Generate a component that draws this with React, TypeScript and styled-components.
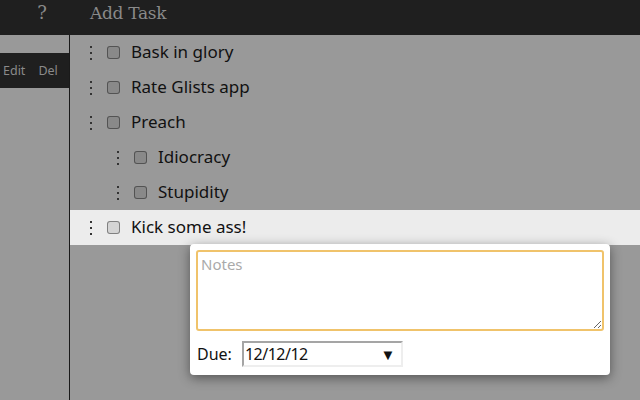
import React from 'react';
import styled, { createGlobalStyle } from 'styled-components';

const GlobalStyle = createGlobalStyle`
  html, body {
    margin: 0;
    padding: 0;
    width: 640px;
    height: 400px;
    overflow: hidden;
    background: #999999;
  }
`;

interface Task {
  title: string;
  depth: number;
  selected?: boolean;
}

const tasks: Task[] = [
  { title: 'Bask in glory', depth: 0 },
  { title: 'Rate Glists app', depth: 0 },
  { title: 'Preach', depth: 0 },
  { title: 'Idiocracy', depth: 1 },
  { title: 'Stupidity', depth: 1 },
  { title: 'Kick some ass!', depth: 0, selected: true },
];

const Shell = styled.div`
  width: 640px;
  height: 400px;
  display: grid;
  grid-template-columns: 70px 1fr;
  grid-template-rows: 35px 1fr;
  background: #999999;
  font-family: 'Noto Sans', 'Open Sans', sans-serif;
`;

const TopBar = styled.header`
  grid-column: 1 / 3;
  display: grid;
  grid-template-columns: 70px 1fr;
  align-items: center;
  background: #1f1f1f;
  color: #8a8a8a;
  font-family: 'DejaVu Serif', 'Liberation Serif', serif;
  font-size: 17px;
`;

const HelpMark = styled.span`
  justify-self: end;
  padding-right: 23px;
  font-size: 18px;
  margin-top: -10px;
`;

const AddTask = styled.span`
  padding-left: 20px;
  margin-top: -10px;
  letter-spacing: -0.3px;
`;

const Sidebar = styled.aside`
  background: #999999;
  border-right: 1px solid #1a1a1a;
  padding-top: 18px;
`;

const ActionStrip = styled.div`
  height: 35px;
  background: #1f1f1f;
  display: flex;
  align-items: center;
  gap: 13px;
  padding-left: 3px;
  color: #8a8a8a;
  font-size: 12.5px;
`;

const Main = styled.main`
  position: relative;
  background: #999999;
`;

const Row = styled.div<{ $depth: number; $selected?: boolean }>`
  height: 35px;
  display: flex;
  align-items: center;
  padding-left: ${({ $depth }) => 20 + $depth * 27}px;
  background: ${({ $selected }) => ($selected ? '#ececec' : 'transparent')};
  color: #111;
  font-size: 17px;
`;

const Handle = styled.span`
  width: 3px;
  display: flex;
  flex-direction: column;
  gap: 4px;
  margin-right: 14px;

  i {
    display: block;
    width: 2px;
    height: 2px;
    background: #333;
  }
`;

const Check = styled.span`
  width: 13px;
  height: 13px;
  box-sizing: border-box;
  border: 1px solid rgba(0, 0, 0, 0.4);
  border-radius: 3px;
  background: rgba(0, 0, 0, 0.1);
  margin-right: 11px;
  margin-top: -1px;
`;

const Title = styled.span`
  margin-top: -3px;
`;

const Popover = styled.div`
  position: absolute;
  left: 120px;
  top: 209px;
  width: 420px;
  height: 131px;
  background: #fff;
  border-radius: 4px;
  box-shadow: 0 3px 12px rgba(0, 0, 0, 0.45);
  padding: 6px;
  box-sizing: border-box;
  display: flex;
  flex-direction: column;
  gap: 10px;
`;

const Notes = styled.textarea`
  width: 408px;
  height: 81px;
  box-sizing: border-box;
  border: 2px solid #f0c36b;
  border-radius: 3px;
  outline: none;
  resize: both;
  font-family: 'Noto Sans', 'Open Sans', sans-serif;
  font-size: 15px;
  padding: 2px 3px;
  margin: 0;

  &::placeholder {
    color: #aaaaaa;
  }
`;

const DueLine = styled.div`
  display: flex;
  align-items: center;
  gap: 10px;
  font-size: 16px;
  color: #111;
  padding-left: 1px;
`;

const DateBox = styled.div`
  width: 161px;
  height: 26px;
  box-sizing: border-box;
  border: 2px solid #eeeeee;
  border-top-color: #a5a5a5;
  border-left-color: #a5a5a5;
  display: flex;
  align-items: center;
  justify-content: space-between;
  padding: 0 6px 0 1px;
  font-size: 16px;
  letter-spacing: -0.5px;
`;

const Arrow = styled.span`
  font-size: 15px;
`;

export default function App() {
  return (
    <>
      <GlobalStyle />
      <Shell>
        <TopBar>
          <HelpMark>?</HelpMark>
          <AddTask>Add Task</AddTask>
        </TopBar>
        <Sidebar>
          <ActionStrip>
            <span>Edit</span>
            <span>Del</span>
          </ActionStrip>
        </Sidebar>
        <Main>
          {tasks.map((t) => (
            <Row key={t.title} $depth={t.depth} $selected={t.selected}>
              <Handle>
                <i />
                <i />
                <i />
              </Handle>
              <Check />
              <Title>{t.title}</Title>
            </Row>
          ))}
          <Popover>
            <Notes placeholder="Notes" />
            <DueLine>
              <span>Due:</span>
              <DateBox>
                <span>12/12/12</span>
                <Arrow>▼</Arrow>
              </DateBox>
            </DueLine>
          </Popover>
        </Main>
      </Shell>
    </>
  );
}
